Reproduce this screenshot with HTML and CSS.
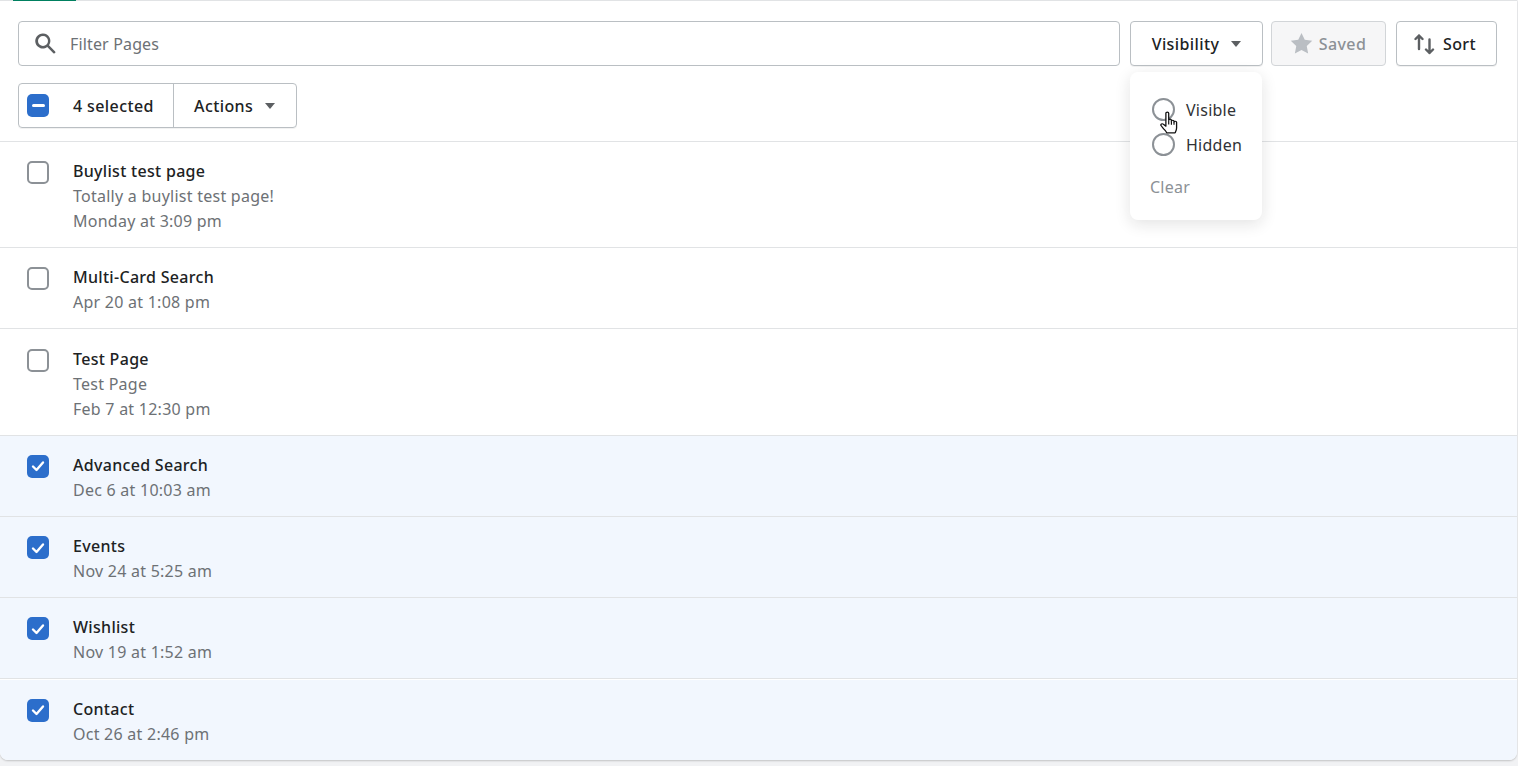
FILE: index.html
```html
<!DOCTYPE html>
<html lang="en">
<head>
  <meta charset="UTF-8" />
  <title>Pages</title>
  <link rel="stylesheet" href="styles.css">
</head>
<body>
  <div class="card">
    <div class="tabs"><div class="tab-active"></div></div>

    <div class="filters">
      <div class="search">
        <svg class="search-icon" viewBox="0 0 20 20" width="25" height="25"><path d="M8 12a4 4 0 1 1 0-8 4 4 0 0 1 0 8zm9.700 4.300-4.900-4.900A6 6 0 0 0 8 2a6 6 0 1 0 3.400 10.800l4.900 4.900a1 1 0 0 0 1.400-1.400z"/></svg>
        <span class="placeholder">Filter Pages</span>
      </div>
      <div class="visibility-wrap">
        <button class="btn btn-visibility">Visibility <span class="caret"></span></button>
        <div class="popover">
          <label class="radio-row"><span class="radio"></span>Visible</label>
          <label class="radio-row"><span class="radio"></span>Hidden</label>
          <div class="clear">Clear</div>
          <svg class="cursor" viewBox="0 0 17 24" width="20" height="25" preserveAspectRatio="none"><path d="M5 2.200c0-1.500 2.400-1.500 2.400 0v6.600c0-1.300 2.300-1.300 2.300 0v1c0-1.200 2.200-1.200 2.200 0v.8c0-1.100 2.200-1.100 2.200.2v5.600c0 2-.6 3-1.300 4.600H5.700c-.5-1.500-1.500-2.500-2.600-3.800L1 14.200c-.9-1.300.8-2.600 1.900-1.500L5 14.600z" fill="#fff" stroke="#111" stroke-width="1.100" stroke-linejoin="round"/><path d="M7.400 9v4M9.700 9.800v3.400M11.900 10.500v2.800" stroke="#111" stroke-width="1" fill="none"/></svg>
        </div>
      </div>
      <button class="btn btn-saved">
        <svg viewBox="0 0 20 20" width="25" height="25"><path d="M10 1.500l2.600 5.500 6 .8-4.400 4.200 1.100 6L10 15.100 4.700 18l1.100-6L1.400 7.800l6-.8z" fill="#babec3"/></svg>
        Saved
      </button>
      <button class="btn btn-sort">
        <svg viewBox="0 0 22 22" width="22" height="22"><path d="M5 16V2.500M1.500 6L5 2.500 8.500 6M15.500 6.500V20M12 16.500l3.500 3.500 3.500-3.500" fill="none" stroke="#5c5f62" stroke-width="2.400" stroke-linecap="round" stroke-linejoin="round"/></svg>
        Sort
      </button>
    </div>

    <div class="bulk-wrap">
      <div class="bulk">
        <div class="bulk-count">
          <span class="check check-on"><span class="dash"></span></span>
          <span class="bulk-label">4 selected</span>
        </div>
        <div class="bulk-actions">Actions <span class="caret"></span></div>
      </div>
    </div>

    <div class="list" id="list"></div>
  </div>

  <script>
    const pages = [
      {title:"Buylist test page", desc:"Totally a buylist test page!", date:"Monday at 3:09 pm", selected:false},
      {title:"Multi-Card Search", date:"Apr 20 at 1:08 pm", selected:false},
      {title:"Test Page", desc:"Test Page", date:"Feb 7 at 12:30 pm", selected:false},
      {title:"Advanced Search", date:"Dec 6 at 10:03 am", selected:true},
      {title:"Events", date:"Nov 24 at 5:25 am", selected:true},
      {title:"Wishlist", date:"Nov 19 at 1:52 am", selected:true},
      {title:"Contact", date:"Oct 26 at 2:46 pm", selected:true}
    ];
    const tick = '<svg viewBox="0 0 22 22" width="22" height="22"><path d="M6 11.500l3.500 3.500 6.500-7.500" fill="none" stroke="#fff" stroke-width="2.400" stroke-linecap="round" stroke-linejoin="round"/></svg>';
    const list = document.getElementById("list");
    pages.forEach(page => {
      const row = document.createElement("div");
      row.className = page.selected ? "row row-selected" : "row";
      row.innerHTML = `
        <span class="check ${page.selected ? "check-on" : ""}">${page.selected ? tick : ""}</span>
        <div>
          <div class="row-title">${page.title}</div>
          ${page.desc ? `<div class="row-sub">${page.desc}</div>` : ""}
          <div class="row-sub">${page.date}</div>
        </div>
      `;
      list.appendChild(row);
    });
  </script>
</body>
</html>
```

FILE: styles.css
```css
* {
  box-sizing: border-box;
}
body {
  font-family: "Noto Sans", "Open Sans", sans-serif;
  font-size: 16px;
  letter-spacing: 0.25px;
  color: #202223;
  background: #f1f2f4;
  margin: 0;
  padding: 0;
  height: 766px;
  overflow: hidden;
}
.card {
  width: 1517px;
  background: #fff;
  border-radius: 0 0 8px 8px;
  box-shadow: 0 1px 2px rgba(0,0,0,0.2);
}
.tabs {
  height: 1px;
  background: #e1e3e5;
  padding-left: 13px;
}
.tab-active {
  width: 63px;
  height: 1px;
  background: #008060;
}
.filters {
  display: flex;
  padding: 20px 20px 0 18px;
}
.search {
  flex: 1;
  height: 45px;
  display: flex;
  align-items: center;
  gap: 12px;
  padding-left: 14px;
  border: 1px solid #babfc3;
  border-radius: 4px;
  margin-right: 10px;
}
.search-icon {
  fill: #5c5f62;
}
.placeholder {
  color: #6d7175;
  letter-spacing: 0.15px;
}
.btn {
  height: 45px;
  display: flex;
  align-items: center;
  justify-content: center;
  font: inherit;
  letter-spacing: 0.4px;
  font-weight: 500;
  color: #202223;
  background: #fff;
  border: 1px solid #babfc3;
  border-radius: 4px;
  box-shadow: 0 1px 0 rgba(0,0,0,0.05);
}
.visibility-wrap {
  position: relative;
  margin-right: 8px;
}
.btn-visibility {
  width: 133px;
  gap: 12px;
}
.btn-saved {
  width: 115px;
  gap: 5px;
  margin-right: 10px;
  padding-right: 8px;
  color: #8c9196;
  background: #f6f6f7;
  border-color: #d2d5d8;
  box-shadow: none;
}
.btn-sort {
  width: 101px;
  gap: 7px;
  padding-right: 9px;
}
.caret {
  display: inline-block;
  width: 0;
  height: 0;
  border-left: 5.5px solid transparent;
  border-right: 5.5px solid transparent;
  border-top: 6px solid #5c5f62;
}
.popover {
  position: absolute;
  top: 51px;
  left: 0;
  width: 132px;
  height: 148px;
  padding: 20px 0 0 22px;
  background: #fff;
  border-radius: 8px;
  box-shadow: 0 4px 16px rgba(23,24,24,0.12);
  z-index: 2;
}
.radio-row {
  display: flex;
  align-items: center;
  gap: 11px;
  height: 35px;
  color: #303235;
}
.radio {
  width: 23px;
  height: 23px;
  border: 2px solid #8c9196;
  border-radius: 50%;
}
.clear {
  margin-top: 13px;
  margin-left: -2px;
  line-height: 25px;
  color: #8c9196;
}
.cursor {
  position: absolute;
  top: 39px;
  left: 30px;
}
.bulk-wrap {
  padding: 17px 0 12.9px 18px;
  border-bottom: 1px solid #e1e3e5;
}
.bulk {
  display: inline-flex;
  height: 45px;
  border: 1px solid #babfc3;
  border-radius: 4px;
  box-shadow: 0 1px 0 rgba(0,0,0,0.05);
  font-weight: 500;
  letter-spacing: 0.4px;
}
.bulk-count {
  display: flex;
  align-items: center;
  width: 155px;
  padding-left: 8px;
  border-right: 1px solid #babfc3;
}
.bulk-label {
  margin-left: 24px;
}
.bulk-actions {
  display: flex;
  align-items: center;
  gap: 12px;
  padding-left: 20px;
  width: 122px;
}
.check {
  flex: none;
  display: flex;
  align-items: center;
  justify-content: center;
  width: 22px;
  height: 23px;
  background: #fff;
  border: 2px solid #8c9196;
  border-radius: 5px;
}
.check-on {
  background: #2c6ecb;
  border: none;
}
.dash {
  width: 13px;
  height: 3px;
  background: #fff;
  border-radius: 2px;
}
.row {
  display: flex;
  gap: 24px;
  padding: 17.25px 0 13px 27px;
  border-bottom: 1px solid #e1e3e5;
}
.row:last-child {
  padding-top: 16.25px;
  border-top: 1px solid #fff;
  border-bottom: none;
  border-radius: 0 0 8px 8px;
}
.row .check {
  margin-top: 2px;
}
.row-selected {
  background: #f2f7fe;
}
.row-title {
  font-weight: 500;
  line-height: 25px;
  letter-spacing: 0.3px;
}
.row-sub {
  line-height: 25px;
  color: #6d7175;
}
```
